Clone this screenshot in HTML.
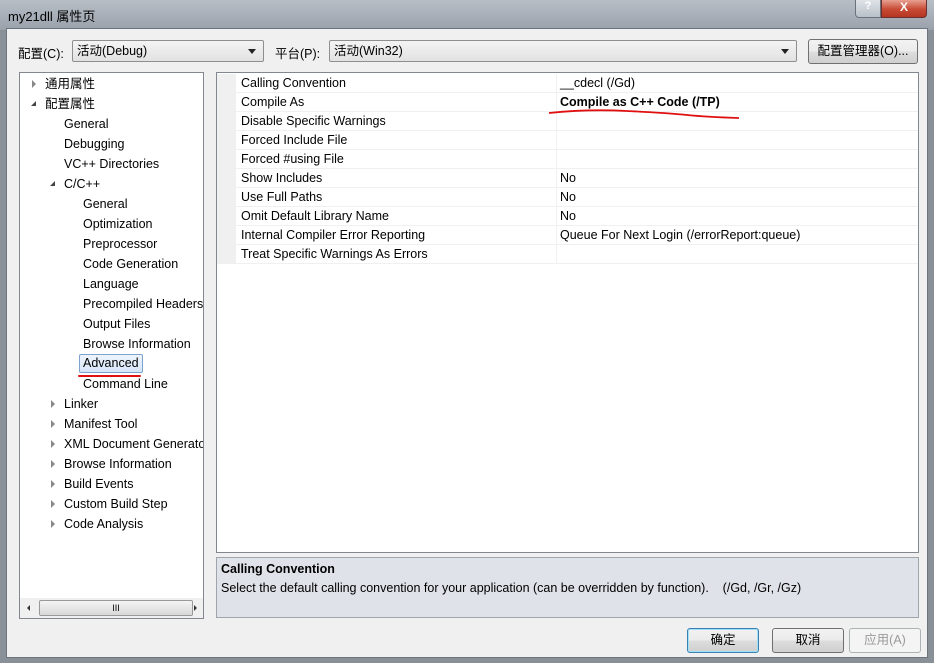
<!DOCTYPE html><html><head><meta charset="utf-8"><style>
*{margin:0;padding:0;box-sizing:border-box}
body{width:934px;height:663px;overflow:hidden;background:#8a9098;font-family:"Liberation Sans","Noto Sans CJK SC",sans-serif;font-size:12.5px;color:#000;position:relative}
.abs{position:absolute}
.title{left:0;top:0;width:934px;height:30px;background:linear-gradient(#b8bec6,#a6adb6 60%,#9aa1aa)}
.body{left:6px;top:28px;width:922px;height:630px;background:#f0f0f0;border:1px solid #6c7480}
.combo{height:22px;background:linear-gradient(#f4f4f4,#e2e2e2);border:1px solid #8e8f8f;border-radius:2px;padding:2px 4px;line-height:16px}
.combo:after{content:"";position:absolute;right:7px;top:8px;border:4px solid transparent;border-top:5px solid #222}
.btn{height:25px;border:1px solid #707070;border-radius:3px;background:linear-gradient(#f2f2f2,#ebebeb 50%,#dddddd 51%,#cfcfcf);text-align:center;line-height:23px}
.tree{left:19px;top:72px;width:185px;height:547px;background:#fff;border:1px solid #828790;overflow:hidden}
.ti{position:absolute;height:20px;line-height:20px;white-space:nowrap}
.grid{left:216px;top:72px;width:703px;height:481px;background:#fff;border:1px solid #828790}
.row{position:absolute;left:0;width:701px;height:19px;border-bottom:1px solid #f0f0f0}
.row .m{position:absolute;left:0;top:0;width:19px;height:19px;background:#f0f0f0}
.row .n{position:absolute;left:24px;top:2px}
.row .v{position:absolute;left:339px;top:0;height:19px;border-left:1px solid #f0f0f0;padding:2px 3px;width:362px}
.tri{position:absolute;width:0;height:0}
.rt{border:4px solid transparent;border-left:4px solid #888;border-right:0}
.dn{border-left:5px solid transparent;border-bottom:5px solid #444}
</style></head><body>
<div class="abs title"></div>
<div class="abs" style="left:8px;top:6px;font-size:13px">my21dll 属性页</div>
<div class="abs" style="left:855px;top:0;width:26px;height:18px;border:1px solid #6a717a;border-top:0;border-radius:0 0 0 4px;background:linear-gradient(#dfe3e8,#b9c0c8);text-align:center;font-size:11px;color:#fff;font-weight:bold">?</div>
<div class="abs" style="left:881px;top:0;width:46px;height:18px;border:1px solid #6a3030;border-top:0;border-radius:0 0 4px 0;background:linear-gradient(#e8a090,#c74a35 55%,#b53520);text-align:center;font-size:12px;color:#fff;font-weight:bold">X</div>
<div class="abs body"></div>
<div class="abs" style="left:18px;top:43px">配置(C):</div>
<div class="abs combo" style="left:72px;top:40px;width:192px">活动(Debug)</div>
<div class="abs" style="left:275px;top:43px">平台(P):</div>
<div class="abs combo" style="left:329px;top:40px;width:468px">活动(Win32)</div>
<div class="abs btn" style="left:808px;top:39px;width:110px">配置管理器(O)...</div>

<div class="abs tree">
<div class="ti" style="left:25px;top:1px">通用属性</div><div class="tri rt" style="left:12px;top:7px"></div>
<div class="ti" style="left:25px;top:21px">配置属性</div><div class="tri dn" style="left:11px;top:28px"></div>
<div class="ti" style="left:44px;top:41px">General</div>
<div class="ti" style="left:44px;top:61px">Debugging</div>
<div class="ti" style="left:44px;top:81px">VC++ Directories</div>
<div class="ti" style="left:44px;top:101px">C/C++</div><div class="tri dn" style="left:30px;top:108px"></div>
<div class="ti" style="left:63px;top:121px">General</div>
<div class="ti" style="left:63px;top:141px">Optimization</div>
<div class="ti" style="left:63px;top:161px">Preprocessor</div>
<div class="ti" style="left:63px;top:181px">Code Generation</div>
<div class="ti" style="left:63px;top:201px">Language</div>
<div class="ti" style="left:63px;top:221px">Precompiled Headers</div>
<div class="ti" style="left:63px;top:241px">Output Files</div>
<div class="ti" style="left:63px;top:261px">Browse Information</div>
<div class="ti" style="left:59px;top:281px;height:19px;line-height:17px;border:1px solid #7da2ce;border-radius:2px;background:linear-gradient(#eef4fc,#d6e6f9);padding:0 3px">Advanced</div>
<div class="abs" style="left:58px;top:302px;width:63px;height:2px;background:#e01010;border-radius:1px"></div>
<div class="ti" style="left:63px;top:301px">Command Line</div>
<div class="ti" style="left:44px;top:321px">Linker</div><div class="tri rt" style="left:31px;top:327px"></div>
<div class="ti" style="left:44px;top:341px">Manifest Tool</div><div class="tri rt" style="left:31px;top:347px"></div>
<div class="ti" style="left:44px;top:361px">XML Document Generator</div><div class="tri rt" style="left:31px;top:367px"></div>
<div class="ti" style="left:44px;top:381px">Browse Information</div><div class="tri rt" style="left:31px;top:387px"></div>
<div class="ti" style="left:44px;top:401px">Build Events</div><div class="tri rt" style="left:31px;top:407px"></div>
<div class="ti" style="left:44px;top:421px">Custom Build Step</div><div class="tri rt" style="left:31px;top:427px"></div>
<div class="ti" style="left:44px;top:441px">Code Analysis</div><div class="tri rt" style="left:31px;top:447px"></div>
<div class="abs" style="left:0;top:525px;width:183px;height:20px;background:#f0f0f0"></div>
<div class="abs" style="left:19px;top:527px;width:154px;height:16px;border:1px solid #999;border-radius:2px;background:linear-gradient(#f4f4f4,#d8d8d8);text-align:center;font-size:9px;line-height:14px">III</div>
<div class="tri" style="left:7px;top:532px;border:3px solid transparent;border-right:3px solid #333;border-left:0"></div>
<div class="tri" style="left:174px;top:532px;border:3px solid transparent;border-left:3px solid #333;border-right:0"></div>
</div>

<div class="abs grid">
<div class="row" style="top:1px"><div class="m"></div><div class="n">Calling Convention</div><div class="v">__cdecl (/Gd)</div></div>
<div class="row" style="top:20px"><div class="m"></div><div class="n">Compile As</div><div class="v" style="font-weight:bold">Compile as C++ Code (/TP)</div></div>
<div class="row" style="top:39px"><div class="m"></div><div class="n">Disable Specific Warnings</div><div class="v"></div></div>
<div class="row" style="top:58px"><div class="m"></div><div class="n">Forced Include File</div><div class="v"></div></div>
<div class="row" style="top:77px"><div class="m"></div><div class="n">Forced #using File</div><div class="v"></div></div>
<div class="row" style="top:96px"><div class="m"></div><div class="n">Show Includes</div><div class="v">No</div></div>
<div class="row" style="top:115px"><div class="m"></div><div class="n">Use Full Paths</div><div class="v">No</div></div>
<div class="row" style="top:134px"><div class="m"></div><div class="n">Omit Default Library Name</div><div class="v">No</div></div>
<div class="row" style="top:153px"><div class="m"></div><div class="n">Internal Compiler Error Reporting</div><div class="v">Queue For Next Login (/errorReport:queue)</div></div>
<div class="row" style="top:172px"><div class="m"></div><div class="n">Treat Specific Warnings As Errors</div><div class="v"></div></div>
<svg class="abs" style="left:330px;top:34px" width="195" height="16"><path d="M2 6 Q40 2 80 4 T140 8 T192 11" stroke="#e01010" stroke-width="1.8" fill="none"/></svg>
</div>

<div class="abs" style="left:216px;top:557px;width:703px;height:61px;background:#dfe2e8;border:1px solid #a0a4ab"></div>
<div class="abs" style="left:221px;top:562px;font-weight:bold">Calling Convention</div>
<div class="abs" style="left:221px;top:581px">Select the default calling convention for your application (can be overridden by function).&nbsp;&nbsp;&nbsp;&nbsp;(/Gd, /Gr, /Gz)</div>

<div class="abs btn" style="left:687px;top:628px;width:72px;border-color:#3c7fb1;box-shadow:inset 0 0 0 1px #9ee0f8">确定</div>
<div class="abs btn" style="left:772px;top:628px;width:72px">取消</div>
<div class="abs btn" style="left:849px;top:628px;width:72px;background:#f4f4f4;border-color:#adb2b5;color:#999">应用(A)</div>
</body></html>
